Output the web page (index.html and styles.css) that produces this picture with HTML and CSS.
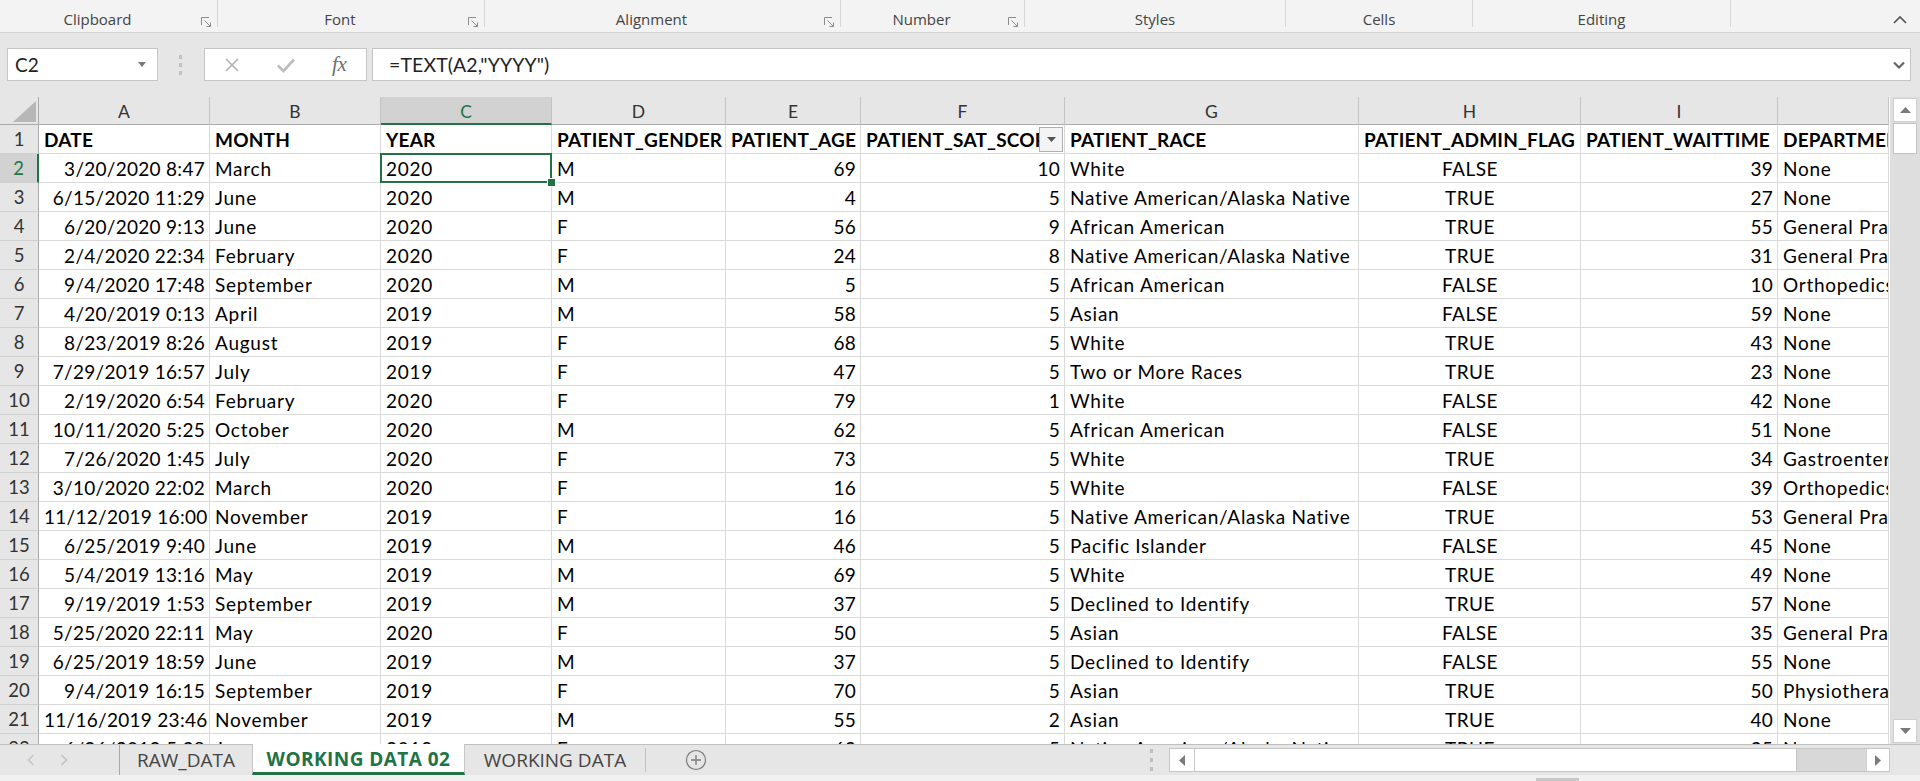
FILE: index.html
```html
<!DOCTYPE html>
<html lang="en">
<head>
<meta charset="utf-8">
<title>Excel - WORKING DATA 02</title>
<link rel="stylesheet" href="styles.css">
</head>
<body>
<div class="app">
  <div class="ribbon">
    <div class="grp g1"><span class="lbl">Clipboard</span><span class="launch"><svg width="11" height="11" viewBox="0 0 11 11"><path d="M0.5 8V0.5H8" fill="none" stroke="#8c8c8c"/><path d="M3.5 3.5L9.5 9.5M5.5 9.5H9.5V5.5" fill="none" stroke="#8c8c8c"/></svg></span></div>
    <div class="grp g2"><span class="lbl">Font</span><span class="launch"><svg width="11" height="11" viewBox="0 0 11 11"><path d="M0.5 8V0.5H8" fill="none" stroke="#8c8c8c"/><path d="M3.5 3.5L9.5 9.5M5.5 9.5H9.5V5.5" fill="none" stroke="#8c8c8c"/></svg></span></div>
    <div class="grp g3"><span class="lbl">Alignment</span><span class="launch"><svg width="11" height="11" viewBox="0 0 11 11"><path d="M0.5 8V0.5H8" fill="none" stroke="#8c8c8c"/><path d="M3.5 3.5L9.5 9.5M5.5 9.5H9.5V5.5" fill="none" stroke="#8c8c8c"/></svg></span></div>
    <div class="grp g4"><span class="lbl">Number</span><span class="launch"><svg width="11" height="11" viewBox="0 0 11 11"><path d="M0.5 8V0.5H8" fill="none" stroke="#8c8c8c"/><path d="M3.5 3.5L9.5 9.5M5.5 9.5H9.5V5.5" fill="none" stroke="#8c8c8c"/></svg></span></div>
    <div class="grp g5"><span class="lbl">Styles</span></div>
    <div class="grp g6"><span class="lbl">Cells</span></div>
    <div class="grp g7"><span class="lbl">Editing</span></div>
    <div class="grp g8"><svg class="collapse" width="14" height="9" viewBox="0 0 14 9"><path d="M1 8L7 2L13 8" fill="none" stroke="#555" stroke-width="1.6"/></svg></div>
  </div>

  <div class="fbar">
    <div class="namebox"><span>C2</span><svg width="8" height="5" viewBox="0 0 8 5"><path d="M0 0H8L4 5Z" fill="#7a7a7a"/></svg></div>
    <div class="dots"><svg width="4" height="20" viewBox="0 0 4 20"><rect x="0" y="0" width="3" height="4" fill="#c2c2c2"/><rect x="0" y="8" width="3" height="4" fill="#c2c2c2"/><rect x="0" y="16" width="3" height="4" fill="#c2c2c2"/></svg></div>
    <div class="fbtns">
      <span class="fb"><svg width="16" height="16" viewBox="0 0 16 16"><path d="M2 2L14 14M14 2L2 14" stroke="#b3b3b3" stroke-width="1.7"/></svg></span>
      <span class="fb"><svg width="20" height="16" viewBox="0 0 20 16"><path d="M2 8.5L7.5 14L18 2.5" fill="none" stroke="#bdbdbd" stroke-width="2.6"/></svg></span>
      <span class="fb fx">fx</span>
    </div>
    <div class="formula"><span class="ftext">=TEXT(A2,"YYYY")</span><svg width="12" height="8" viewBox="0 0 12 8"><path d="M1 1.5L6 6.5L11 1.5" fill="none" stroke="#666" stroke-width="2.2"/></svg></div>
  </div>

  <div class="sheetwrap">
    <div class="sheet">
      <div class="corner"><svg width="39" height="28" viewBox="0 0 39 28"><path d="M13 25H36V4Z" fill="#b7b7b7"/></svg></div>
      <div class="ch">A</div><div class="ch">B</div><div class="ch csel">C</div><div class="ch">D</div><div class="ch">E</div><div class="ch">F</div><div class="ch">G</div><div class="ch">H</div><div class="ch">I</div><div class="ch"></div>

      <div class="rh">1</div><div class="c b">DATE</div><div class="c b">MONTH</div><div class="c b">YEAR</div><div class="c b">PATIENT_GENDER</div><div class="c b">PATIENT_AGE</div><div class="c b flt">PATIENT_SAT_SCORE<span class="fltbtn"><svg width="9" height="5" viewBox="0 0 9 5"><path d="M0 0H9L4.5 5Z" fill="#555"/></svg></span></div><div class="c b">PATIENT_RACE</div><div class="c b">PATIENT_ADMIN_FLAG</div><div class="c b">PATIENT_WAITTIME</div><div class="c b">DEPARTMENT</div>

      <div class="rh rsel">2</div><div class="c r">3/20/2020 8:47</div><div class="c">March</div><div class="c sel">2020</div><div class="c">M</div><div class="c r">69</div><div class="c r">10</div><div class="c">White</div><div class="c m">FALSE</div><div class="c r">39</div><div class="c">None</div>
      <div class="rh">3</div><div class="c r">6/15/2020 11:29</div><div class="c">June</div><div class="c">2020</div><div class="c">M</div><div class="c r">4</div><div class="c r">5</div><div class="c">Native American/Alaska Native</div><div class="c m">TRUE</div><div class="c r">27</div><div class="c">None</div>
      <div class="rh">4</div><div class="c r">6/20/2020 9:13</div><div class="c">June</div><div class="c">2020</div><div class="c">F</div><div class="c r">56</div><div class="c r">9</div><div class="c">African American</div><div class="c m">TRUE</div><div class="c r">55</div><div class="c">General Practice</div>
      <div class="rh">5</div><div class="c r">2/4/2020 22:34</div><div class="c">February</div><div class="c">2020</div><div class="c">F</div><div class="c r">24</div><div class="c r">8</div><div class="c">Native American/Alaska Native</div><div class="c m">TRUE</div><div class="c r">31</div><div class="c">General Practice</div>
      <div class="rh">6</div><div class="c r">9/4/2020 17:48</div><div class="c">September</div><div class="c">2020</div><div class="c">M</div><div class="c r">5</div><div class="c r">5</div><div class="c">African American</div><div class="c m">FALSE</div><div class="c r">10</div><div class="c">Orthopedics</div>
      <div class="rh">7</div><div class="c r">4/20/2019 0:13</div><div class="c">April</div><div class="c">2019</div><div class="c">M</div><div class="c r">58</div><div class="c r">5</div><div class="c">Asian</div><div class="c m">FALSE</div><div class="c r">59</div><div class="c">None</div>
      <div class="rh">8</div><div class="c r">8/23/2019 8:26</div><div class="c">August</div><div class="c">2019</div><div class="c">F</div><div class="c r">68</div><div class="c r">5</div><div class="c">White</div><div class="c m">TRUE</div><div class="c r">43</div><div class="c">None</div>
      <div class="rh">9</div><div class="c r">7/29/2019 16:57</div><div class="c">July</div><div class="c">2019</div><div class="c">F</div><div class="c r">47</div><div class="c r">5</div><div class="c">Two or More Races</div><div class="c m">TRUE</div><div class="c r">23</div><div class="c">None</div>
      <div class="rh">10</div><div class="c r">2/19/2020 6:54</div><div class="c">February</div><div class="c">2020</div><div class="c">F</div><div class="c r">79</div><div class="c r">1</div><div class="c">White</div><div class="c m">FALSE</div><div class="c r">42</div><div class="c">None</div>
      <div class="rh">11</div><div class="c r">10/11/2020 5:25</div><div class="c">October</div><div class="c">2020</div><div class="c">M</div><div class="c r">62</div><div class="c r">5</div><div class="c">African American</div><div class="c m">FALSE</div><div class="c r">51</div><div class="c">None</div>
      <div class="rh">12</div><div class="c r">7/26/2020 1:45</div><div class="c">July</div><div class="c">2020</div><div class="c">F</div><div class="c r">73</div><div class="c r">5</div><div class="c">White</div><div class="c m">TRUE</div><div class="c r">34</div><div class="c">Gastroenterology</div>
      <div class="rh">13</div><div class="c r">3/10/2020 22:02</div><div class="c">March</div><div class="c">2020</div><div class="c">F</div><div class="c r">16</div><div class="c r">5</div><div class="c">White</div><div class="c m">FALSE</div><div class="c r">39</div><div class="c">Orthopedics</div>
      <div class="rh">14</div><div class="c r">11/12/2019 16:00</div><div class="c">November</div><div class="c">2019</div><div class="c">F</div><div class="c r">16</div><div class="c r">5</div><div class="c">Native American/Alaska Native</div><div class="c m">TRUE</div><div class="c r">53</div><div class="c">General Practice</div>
      <div class="rh">15</div><div class="c r">6/25/2019 9:40</div><div class="c">June</div><div class="c">2019</div><div class="c">M</div><div class="c r">46</div><div class="c r">5</div><div class="c">Pacific Islander</div><div class="c m">FALSE</div><div class="c r">45</div><div class="c">None</div>
      <div class="rh">16</div><div class="c r">5/4/2019 13:16</div><div class="c">May</div><div class="c">2019</div><div class="c">M</div><div class="c r">69</div><div class="c r">5</div><div class="c">White</div><div class="c m">TRUE</div><div class="c r">49</div><div class="c">None</div>
      <div class="rh">17</div><div class="c r">9/19/2019 1:53</div><div class="c">September</div><div class="c">2019</div><div class="c">M</div><div class="c r">37</div><div class="c r">5</div><div class="c">Declined to Identify</div><div class="c m">TRUE</div><div class="c r">57</div><div class="c">None</div>
      <div class="rh">18</div><div class="c r">5/25/2020 22:11</div><div class="c">May</div><div class="c">2020</div><div class="c">F</div><div class="c r">50</div><div class="c r">5</div><div class="c">Asian</div><div class="c m">FALSE</div><div class="c r">35</div><div class="c">General Practice</div>
      <div class="rh">19</div><div class="c r">6/25/2019 18:59</div><div class="c">June</div><div class="c">2019</div><div class="c">M</div><div class="c r">37</div><div class="c r">5</div><div class="c">Declined to Identify</div><div class="c m">FALSE</div><div class="c r">55</div><div class="c">None</div>
      <div class="rh">20</div><div class="c r">9/4/2019 16:15</div><div class="c">September</div><div class="c">2019</div><div class="c">F</div><div class="c r">70</div><div class="c r">5</div><div class="c">Asian</div><div class="c m">TRUE</div><div class="c r">50</div><div class="c">Physiotherapy</div>
      <div class="rh">21</div><div class="c r">11/16/2019 23:46</div><div class="c">November</div><div class="c">2019</div><div class="c">M</div><div class="c r">55</div><div class="c r">2</div><div class="c">Asian</div><div class="c m">TRUE</div><div class="c r">40</div><div class="c">None</div>
      <div class="rh">22</div><div class="c r">6/26/2019 5:38</div><div class="c">June</div><div class="c">2019</div><div class="c">F</div><div class="c r">63</div><div class="c r">5</div><div class="c">Native American/Alaska Native</div><div class="c m">TRUE</div><div class="c r">35</div><div class="c">None</div>
    </div>
    <div class="vscroll">
      <div class="sbtn"><svg width="11" height="6" viewBox="0 0 11 6"><path d="M0 6H11L5.5 0Z" fill="#7a7a7a"/></svg></div>
      <div class="vthumb"></div>
      <div class="sbtn down"><svg width="11" height="6" viewBox="0 0 11 6"><path d="M0 0H11L5.5 6Z" fill="#7a7a7a"/></svg></div>
    </div>
  </div>

  <div class="tabbar">
    <div class="tnav">
      <svg width="8" height="12" viewBox="0 0 8 12"><path d="M6.5 1L1.5 6L6.5 11" fill="none" stroke="#c4c4c4" stroke-width="1.5"/></svg>
      <svg width="8" height="12" viewBox="0 0 8 12"><path d="M1.5 1L6.5 6L1.5 11" fill="none" stroke="#c4c4c4" stroke-width="1.5"/></svg>
    </div>
    <div class="tab t1">RAW_DATA</div>
    <div class="tab active">WORKING DATA 02</div>
    <div class="tab t3">WORKING DATA</div>
    <div class="addsheet"><svg width="22" height="22" viewBox="0 0 22 22"><circle cx="11" cy="11" r="9.5" fill="none" stroke="#7a7a7a" stroke-width="1.2"/><path d="M11 6V16M6 11H16" stroke="#7a7a7a" stroke-width="1.3"/></svg></div>
    <div class="tspacer"></div>
    <div class="splitter"><svg width="3" height="22" viewBox="0 0 3 22"><rect x="0" y="0" width="3" height="4" fill="#bdbdbd"/><rect x="0" y="9" width="3" height="4" fill="#bdbdbd"/><rect x="0" y="18" width="3" height="4" fill="#bdbdbd"/></svg></div>
    <div class="hscroll">
      <div class="hbtn"><svg width="6" height="11" viewBox="0 0 6 11"><path d="M6 0V11L0 5.5Z" fill="#7a7a7a"/></svg></div>
      <div class="hthumb"></div>
      <div class="htrack"></div>
      <div class="hbtn right"><svg width="6" height="11" viewBox="0 0 6 11"><path d="M0 0V11L6 5.5Z" fill="#7a7a7a"/></svg></div>
    </div>
    <div class="tend"></div>
  </div>
  <div class="status"><span class="smark"></span></div>
</div>
</body>
</html>
```

FILE: styles.css
```css
html, body {
  margin: 0;
  padding: 0;
}
body {
  width: 1920px;
  height: 781px;
  overflow: hidden;
  background: #f3f3f3;
  font-family: "Open Sans", "Noto Sans", sans-serif;
  color: #444;
}
.app {
  width: 1920px;
  height: 781px;
  display: flex;
  flex-direction: column;
}

/* Ribbon group labels */
.ribbon {
  height: 32px;
  flex: 0 0 32px;
  background: #f3f3f3;
  border-bottom: 1px solid #d4d4d4;
  display: flex;
  align-items: flex-start;
}
.grp {
  box-sizing: border-box;
  height: 27px;
  border-right: 1px solid #d6d6d6;
  display: flex;
  align-items: flex-end;
}
.grp .lbl {
  flex: 1;
  text-align: center;
  font-size: 15px;
  line-height: 20px;
  margin-bottom: -2px;
  color: #444;
}
.grp .launch {
  width: 22px;
  height: 14px;
  display: flex;
  align-items: center;
  justify-content: center;
  margin-bottom: -2px;
}
.g1 { width: 218px; }
.g2 { width: 267px; }
.g3 { width: 356px; }
.g4 { width: 184px; }
.g5 { width: 261px; }
.g6 { width: 187px; }
.g7 { width: 258px; }
.g8 {
  flex: 1;
  border-right: none;
  justify-content: flex-end;
  padding-right: 13px;
  align-items: center;
  height: 38px;
}

/* Formula bar */
.fbar {
  flex: 0 0 64px;
  height: 64px;
  box-sizing: border-box;
  background: #e6e6e6;
  display: flex;
  align-items: flex-start;
  padding-top: 15px;
}
.namebox {
  box-sizing: border-box;
  margin-left: 7px;
  width: 151px;
  height: 33px;
  background: #fff;
  border: 1px solid #c6c6c6;
  display: flex;
  align-items: center;
  justify-content: space-between;
  padding: 0 11px 0 7px;
  font-family: "Lato", sans-serif;
  font-size: 19px;
  color: #222;
}
.dots {
  width: 46px;
  height: 33px;
  display: flex;
  align-items: center;
  justify-content: center;
}
.fbtns {
  box-sizing: border-box;
  width: 163px;
  height: 33px;
  background: #fff;
  border: 1px solid #c6c6c6;
  display: flex;
}
.fb {
  width: 54px;
  display: flex;
  align-items: center;
  justify-content: center;
}
.fx {
  font-family: "Liberation Serif", serif;
  font-style: italic;
  font-size: 21px;
  color: #707070;
  letter-spacing: -0.5px;
}
.formula {
  box-sizing: border-box;
  margin-left: 5px;
  width: 1539px;
  height: 33px;
  background: #fff;
  border: 1px solid #c6c6c6;
  display: flex;
  align-items: center;
  justify-content: space-between;
  padding: 0 5px 0 16px;
  font-family: "Lato", sans-serif;
  font-size: 19.5px;
  letter-spacing: 0.1px;
  color: #222;
}

/* Sheet */
.sheetwrap {
  flex: 0 0 647px;
  height: 647px;
  display: flex;
  overflow: hidden;
  background: #fff;
}
.sheet {
  flex: 0 0 1890px;
  width: 1890px;
  height: 647px;
  overflow: hidden;
  display: grid;
  grid-template-columns: 39px 171px 171px 171px 174px 135px 204px 294px 222px 197px 111px;
  grid-template-rows: 28px;
  grid-auto-rows: 29px;
  font-family: "Lato", sans-serif;
  color: #000;
  align-content: start;
}
.corner {
  background: #e6e6e6;
  border-right: 1px solid #ababab;
  border-bottom: 1px solid #ababab;
  box-sizing: border-box;
  overflow: hidden;
}
.corner svg { display: block; }
.ch {
  box-sizing: border-box;
  background: #e6e6e6;
  border-right: 1px solid #c4c4c4;
  border-bottom: 1px solid #ababab;
  text-align: center;
  font-size: 17.5px;
  line-height: 30px;
  color: #333;
}
.ch.csel {
  background: #d2d2d2;
  color: #217346;
  border-bottom: 2px solid #217346;
  line-height: 29px;
}
.rh {
  box-sizing: border-box;
  background: #e6e6e6;
  border-right: 1px solid #ababab;
  border-bottom: 1px solid #d0d0d0;
  text-align: center;
  font-size: 18.5px;
  line-height: 27px;
  padding-top: 1px;
  color: #333;
}
.rh.rsel {
  background: #d2d2d2;
  color: #217346;
  border-right: 2px solid #217346;
}
.c {
  box-sizing: border-box;
  border-right: 1px solid #dadada;
  border-bottom: 1px solid #dadada;
  padding: 1px 4px 0 5px;
  font-size: 19px;
  letter-spacing: 0.75px;
  line-height: 27px;
  white-space: nowrap;
  overflow: hidden;
}
.c.r { text-align: right; letter-spacing: 0.28px; }
.c.m { text-align: center; letter-spacing: 0.5px; }
.c.b { font-weight: 700; letter-spacing: 0.2px; }
.c.flt { position: relative; }
.fltbtn {
  position: absolute;
  right: 1px;
  top: 2px;
  width: 24px;
  height: 25px;
  box-sizing: border-box;
  background: #f4f4f4;
  border: 1px solid #b0b0b0;
  display: flex;
  align-items: center;
  justify-content: center;
}
.c.sel {
  position: relative;
  overflow: visible;
  z-index: 2;
}
.c.sel::before {
  content: "";
  position: absolute;
  left: -1px;
  top: -1px;
  right: -1px;
  bottom: -1px;
  border: 2px solid #217346;
}
.c.sel::after {
  content: "";
  position: absolute;
  right: -5px;
  bottom: -5px;
  width: 7px;
  height: 7px;
  background: #217346;
  border: 1px solid #fff;
}

/* vertical scrollbar */
.vscroll {
  flex: 1;
  background: #dedede;
  display: flex;
  flex-direction: column;
  padding: 1px 3px 1px 3px;
  box-sizing: border-box;
}
.sbtn {
  height: 24px;
  box-sizing: border-box;
  background: #fff;
  border: 1px solid #cfcfcf;
  display: flex;
  align-items: center;
  justify-content: center;
}
.sbtn.down { margin-top: auto; }
.vthumb {
  height: 31px;
  box-sizing: border-box;
  background: #fff;
  border: 1px solid #c2c2c2;
  margin-top: 1px;
}

/* sheet tabs */
.tabbar {
  flex: 0 0 30px;
  height: 30px;
  background: #e6e6e6;
  border-top: 1px solid #c0c0c0;
  display: flex;
  align-items: stretch;
}
.tnav {
  width: 119px;
  display: flex;
  align-items: center;
  gap: 25px;
  padding-left: 27px;
  box-sizing: border-box;
}
.tab {
  box-sizing: border-box;
  display: flex;
  align-items: center;
  justify-content: center;
  font-size: 19px;
  color: #444;
  border-left: 1px solid #a8a8a8;
}
.t1 { width: 133px; }
.tab.active {
  width: 213px;
  background: #fff;
  color: #217346;
  font-weight: 700;
  letter-spacing: 0.45px;
  border-left: 1px solid #c6c6c6;
  border-right: 1px solid #c6c6c6;
  border-bottom: 3px solid #217346;
  margin-top: -1px;
  padding-top: 2px;
}
.t3 {
  width: 181px;
  border-left: none;
  border-right: 1px solid #c0c0c0;
  margin: 3px 0 3px 0;
}
.addsheet {
  width: 100px;
  display: flex;
  align-items: center;
  justify-content: center;
}
.tspacer { flex: 1; }
.splitter {
  width: 19px;
  display: flex;
  align-items: center;
  justify-content: flex-start;
}
.hscroll {
  box-sizing: border-box;
  width: 721px;
  height: 24px;
  align-self: center;
  border: 1px solid #c6c6c6;
  display: flex;
  background: #fff;
}
.hbtn {
  width: 24px;
  display: flex;
  align-items: center;
  justify-content: center;
  background: #fff;
}
.hbtn.right { width: 22px; border-left: 1px solid #d0d0d0; }
.hthumb {
  width: 603px;
  border-left: 1px solid #c6c6c6;
  border-right: 1px solid #c6c6c6;
  box-sizing: border-box;
  background: #fff;
}
.htrack {
  flex: 1;
  background: #d8d8d8;
}
.tend { width: 30px; }
.status {
  flex: 1;
  background: #f1f1f1;
  display: flex;
  align-items: flex-end;
}
.smark {
  margin-left: 1536px;
  width: 43px;
  height: 3px;
  background: #c8c8c8;
}
```
